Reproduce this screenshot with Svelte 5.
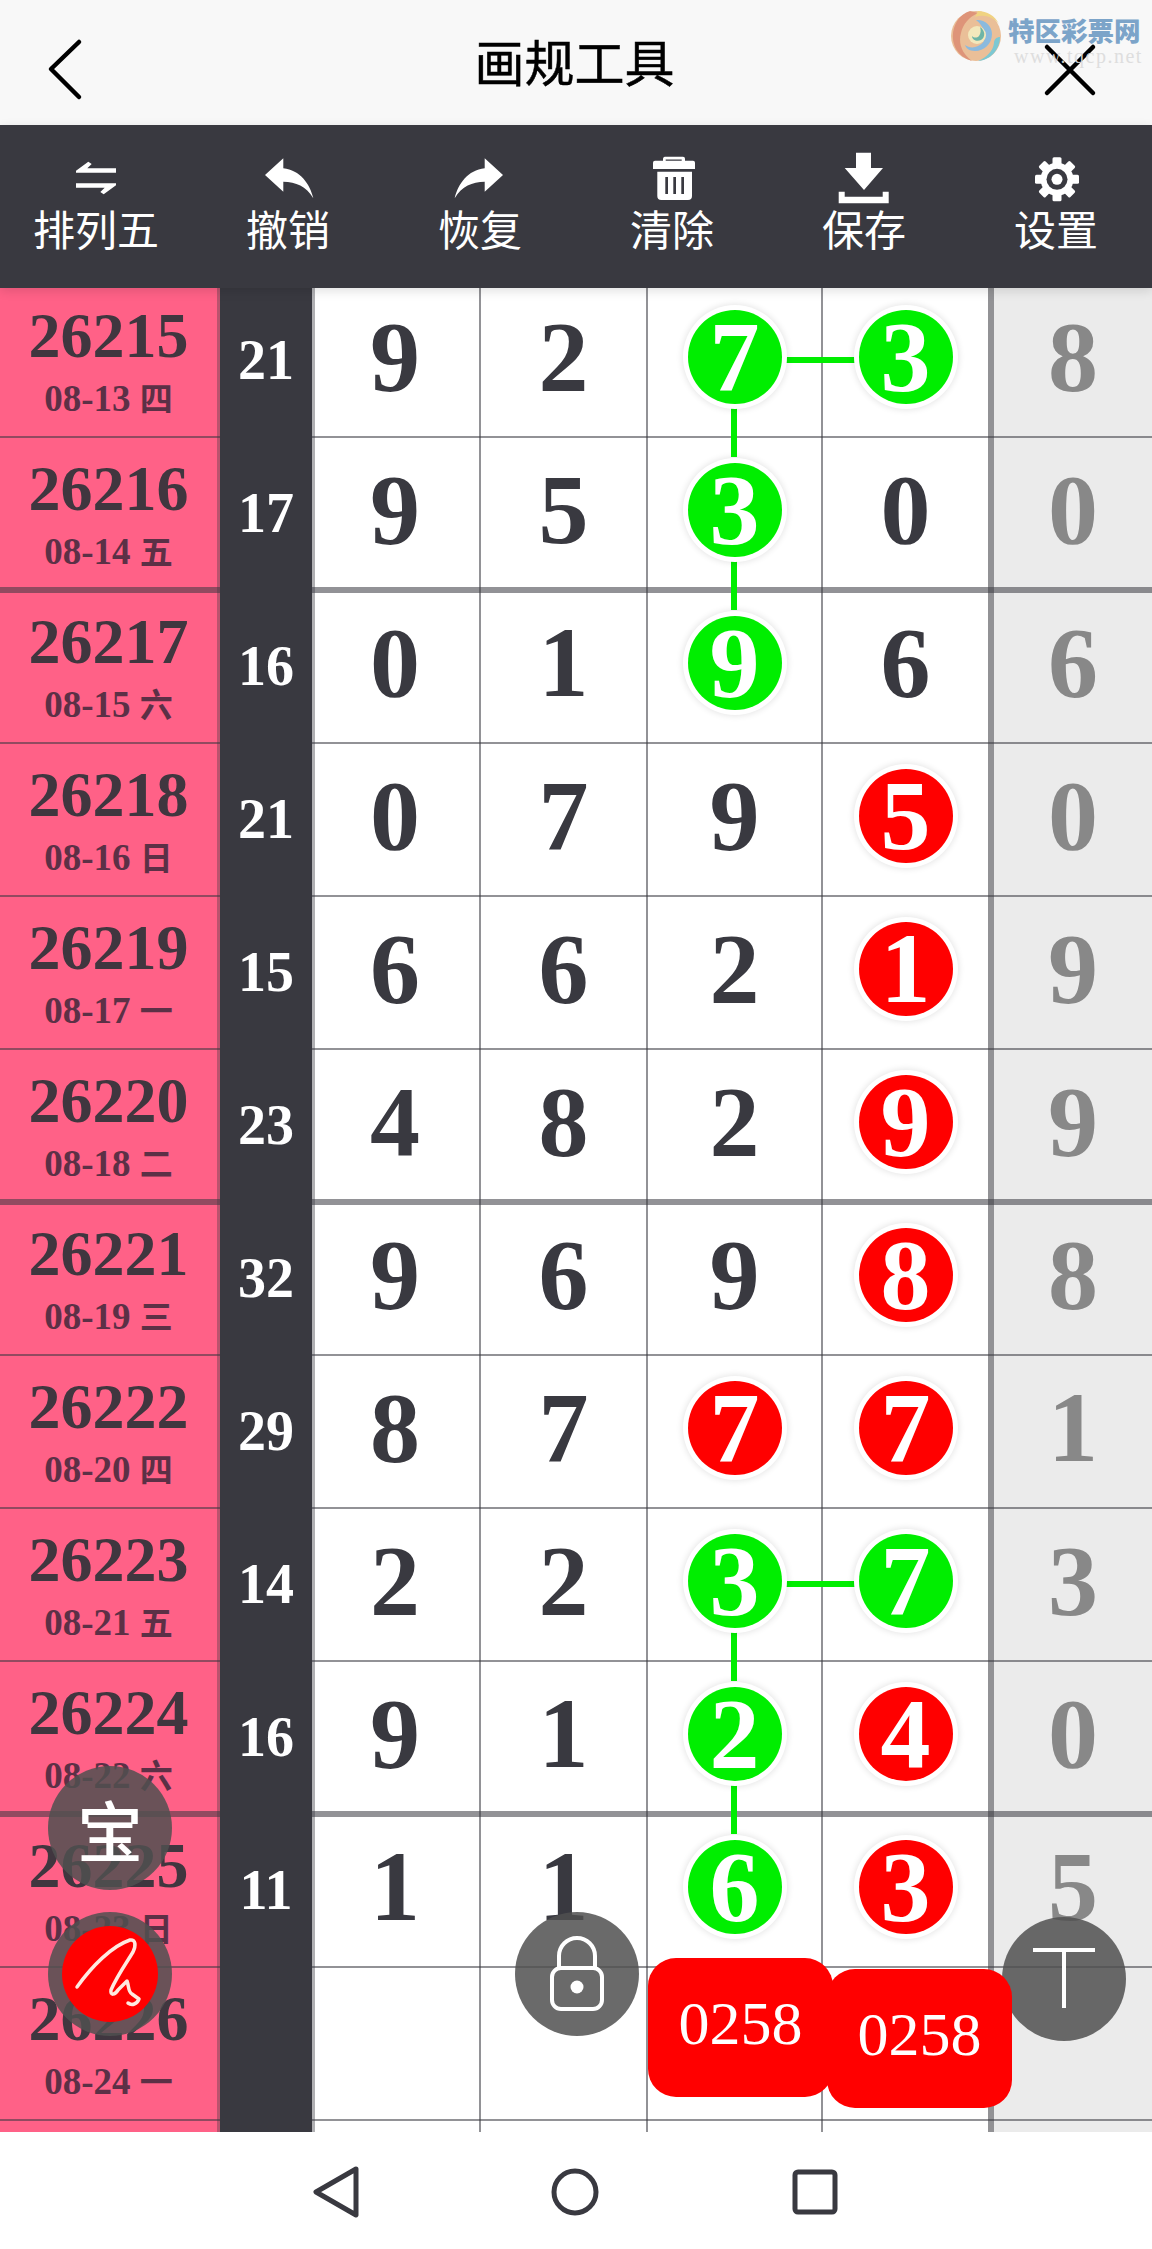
<script lang="ts">
  type Cell = number | null;
  interface Row {
    period: number;
    date: string;
    week: string;
    sum: number | null;
    nums: Cell[];
    /* index of the column -> ball colour */
    balls?: Record<number, 'g' | 'r'>;
    down?: boolean; // connector to the ball in the row below
    side?: boolean; // connector between the two balls of this row
  }

  const rows: Row[] = [
    { period: 26215, date: '08-13', week: '四', sum: 21, nums: [9, 2, 7, 3, 8], balls: { 2: 'g', 3: 'g' }, down: true, side: true },
    { period: 26216, date: '08-14', week: '五', sum: 17, nums: [9, 5, 3, 0, 0], balls: { 2: 'g' }, down: true },
    { period: 26217, date: '08-15', week: '六', sum: 16, nums: [0, 1, 9, 6, 6], balls: { 2: 'g' } },
    { period: 26218, date: '08-16', week: '日', sum: 21, nums: [0, 7, 9, 5, 0], balls: { 3: 'r' } },
    { period: 26219, date: '08-17', week: '一', sum: 15, nums: [6, 6, 2, 1, 9], balls: { 3: 'r' } },
    { period: 26220, date: '08-18', week: '二', sum: 23, nums: [4, 8, 2, 9, 9], balls: { 3: 'r' } },
    { period: 26221, date: '08-19', week: '三', sum: 32, nums: [9, 6, 9, 8, 8], balls: { 3: 'r' } },
    { period: 26222, date: '08-20', week: '四', sum: 29, nums: [8, 7, 7, 7, 1], balls: { 2: 'r', 3: 'r' } },
    { period: 26223, date: '08-21', week: '五', sum: 14, nums: [2, 2, 3, 7, 3], balls: { 2: 'g', 3: 'g' }, down: true, side: true },
    { period: 26224, date: '08-22', week: '六', sum: 16, nums: [9, 1, 2, 4, 0], balls: { 2: 'g', 3: 'r' }, down: true },
    { period: 26225, date: '08-23', week: '日', sum: 11, nums: [1, 1, 6, 3, 5], balls: { 2: 'g', 3: 'r' } },
    { period: 26226, date: '08-24', week: '一', sum: null, nums: [null, null, null, null, null] }
  ];

  const tools = ['排列五', '撤销', '恢复', '清除', '保存', '设置'];
  const teeth = [0, 45, 90, 135, 180, 225, 270, 315];
</script>

<div class="app">
  <header class="top">
    <svg class="back" viewBox="0 0 40 64" aria-hidden="true">
      <path d="M34 5 6 32l28 28" />
    </svg>
    <h1>画规工具</h1>
    <svg class="close" viewBox="0 0 56 56" aria-hidden="true">
      <path d="M5 5l46 46M51 5 5 51" />
    </svg>
  </header>

  <nav class="tools">
    {#each tools as label, i}
      <div class="tool">
        <svg viewBox="0 0 60 60" aria-hidden="true">
          {#if i === 0}
            <path d="M10 20.7 22.3 11.7l3.4 2.3-4.400 4.300H50v4.400H10zM50 35.300 37.700 44.300 34.300 42l4.400-4.300H10v-4.400h40z" />
          {:else if i === 1}
            <path d="M7 25 25.300 8.300v10C42 20 52 34 55.300 48.300 48 36 38 32 25.300 31.700v10z" />
          {:else if i === 2}
            <path transform="translate(60 0) scale(-1 1)" d="M7 25 25.300 8.300v10C42 20 52 34 55.300 48.300 48 36 38 32 25.300 31.700v10z" />
          {:else if i === 3}
            <path d="M22.700 6.700h18.300a2 2 0 0 1 2 2v2h8a2 2 0 0 1 2 2v6.300H11v-6.300a2 2 0 0 1 2-2h8v-2a2 2 0 0 1 1.700-2zM15.300 21.700H50V46a4 4 0 0 1-4 4H19.300a4 4 0 0 1-4-4z" />
            <path class="cut" d="M23.300 27h2.700v17h-2.700zM31.300 27H34v17h-2.700zM39.300 27H42v17h-2.700zM23.700 9.400h16v1.400h-16z" />
          {:else if i === 4}
            <path d="M22 2.700h15V18h12L30 40 10.700 18H22zM4.700 41.700h6v5h38v-5h6v11.600H4.700z" />
          {:else}
            <g transform="translate(31 29.300)">
              {#each teeth as t}
                <rect x="-4.500" y="-22" width="9" height="12" rx="1.500" transform="rotate({t})" />
              {/each}
              <circle r="16.500" />
              <circle class="cut" r="10.500" />
              <circle r="5.500" />
            </g>
          {/if}
        </svg>
        <span>{label}</span>
      </div>
    {/each}
  </nav>

  <main class="board">
    <div class="rows">
      {#each rows as row, i}
        <div class="row" class:thick={row.period % 4 === 0} style="z-index: {rows.length - i + 1}">
          <div class="period">
            <strong>{row.period}</strong>
            <span>{row.date} <em>{row.week}</em></span>
          </div>
          <div class="sum">{row.sum ?? ''}</div>
          {#each row.nums as n, c}
            {@const ball = row.balls?.[c]}
            <div class="num">
              {#if ball}
                <b class="ball {ball}">{n}</b>
              {:else}
                {n ?? ''}
              {/if}
            </div>
          {/each}
          {#if row.down}<i class="link down"></i>{/if}
          {#if row.side}<i class="link side"></i>{/if}
        </div>
      {/each}
      <div class="row">
        <div class="period"></div>
        <div class="sum"></div>
        {#each [0, 1, 2, 3, 4] as _}
          <div class="num"></div>
        {/each}
      </div>
    </div>
  </main>

  <footer class="softkeys">
    <svg viewBox="0 0 48 54" class="k-back" aria-hidden="true">
      <path d="M44 4 4 27l40 23z" />
    </svg>
    <svg viewBox="0 0 54 54" class="k-home" aria-hidden="true">
      <circle cx="27" cy="27" r="21" />
    </svg>
    <svg viewBox="0 0 54 54" class="k-recent" aria-hidden="true">
      <rect x="5" y="5" width="40" height="40" rx="3" />
    </svg>
  </footer>

  <!-- watermark stamped on the header -->
  <div class="mark" aria-hidden="true">
    <svg viewBox="0 0 52 54">
      <circle cx="26" cy="27" r="25" fill="#e9b98e" />
      <path d="M20 2C6 6-1 24 5 38c3 7 10 12 17 14C12 45 8 34 11 24 13 15 19 8 28 4z" fill="#dc8a6c" />
      <path d="M28 2c9 0 17 5 21 13-6-7-15-10-24-7z" fill="#f0cf75" />
      <path d="M50 28c0 12-9 23-22 24 9-4 15-10 16-18 0-4 3-6 6-6z" fill="#6fc3cf" />
      <path d="M26 11c8-1 16 5 16 14 0 10-8 17-17 17-6 0-9-3-10-6 4 3 9 3 13 1 5-2 8-7 7-12-1-6-5-11-9-14z" fill="#7fb4dc" />
      <circle cx="27" cy="26" r="9" fill="#f3e7b6" />
      <path d="M30 18c5 3 6 10 1 13-4 2-9 0-9-4 2 2 5 2 7 0 2-3 2-6 1-9z" fill="#5fae9e" />
    </svg>
    <div>
      <strong>特区彩票网</strong>
      <small>www.tqcp.net</small>
    </div>
  </div>

  <button class="fab bao">宝</button>
  <button class="fab pen" aria-label="画笔">
    <span>
      <svg viewBox="0 0 96 96" aria-hidden="true">
        <path d="M15 61C30 40 50 20 68 14c6-1 6 6 3 12-6 10-16 24-22 38-1 6 4 5 7 0l9-9c2 5 1 11 5 13l7 5c-2 5-7 7-11 4" />
      </svg>
    </span>
  </button>
  <button class="fab lock" aria-label="锁定">
    <svg viewBox="0 0 124 124" aria-hidden="true">
      <rect x="37" y="56" width="50" height="41" rx="9" />
      <path d="M44 56V44a18 18 0 0 1 36 0v12" />
      <circle class="dot" cx="62" cy="75" r="6.500" />
    </svg>
  </button>
  <button class="fab text" aria-label="文字">
    <svg viewBox="0 0 124 124" aria-hidden="true">
      <path d="M31 33h62M62 33v58" />
    </svg>
  </button>
  <div class="chip one">0258</div>
  <div class="chip two">0258</div>
</div>

<style>
  :global(body) {
    margin: 0;
    background: #fff;
  }

  .app {
    position: relative;
    width: 1152px;
    height: 2249px;
    overflow: hidden;
    display: flex;
    flex-direction: column;
    font-family: 'Liberation Serif', 'Noto Sans CJK SC', serif;
    color: #393940;
  }

  .top {
    flex: 0 0 125px;
    display: grid;
    grid-template-columns: 1fr auto 1fr;
    align-items: center;
    padding: 0 54px 0 45px;
    background: #f8f8f8;
    color: #000;
  }

  .top h1 {
    margin: 0 0 6px;
    padding-left: 6px;
    font: 400 50px/1 'Noto Sans CJK SC', sans-serif;
    -webkit-text-stroke: 0.5px #000;
  }

  .back {
    width: 40px;
    height: 64px;
    margin-top: 12px;
    fill: none;
    stroke: #000;
    stroke-width: 4.5;
    stroke-linecap: round;
    stroke-linejoin: round;
  }

  .close {
    justify-self: end;
    width: 56px;
    height: 56px;
    margin-top: 14px;
    fill: none;
    stroke: #000;
    stroke-width: 4.5;
    stroke-linecap: round;
  }

  .tools {
    position: relative;
    z-index: 50;
    flex: 0 0 163px;
    display: grid;
    grid-template-columns: repeat(6, 1fr);
    background: #393940;
    color: #fff;
    box-shadow: 0 3px 10px rgb(0 0 0 / 0.12);
  }

  .tool {
    display: flex;
    flex-direction: column;
    align-items: center;
    padding-top: 25px;
  }

  .tool svg {
    width: 60px;
    height: 60px;
    fill: #fff;
  }

  .tool svg .cut {
    fill: #393940;
  }

  .tool span {
    font: 400 42px/46px 'Noto Sans CJK SC', sans-serif;
    margin-top: -5px;
  }

  .board {
    flex: 0 0 1844px;
    overflow: hidden;
  }

  .rows {
    margin-top: -4px;
  }

  .row {
    position: relative;
    display: grid;
    grid-template-columns: 220px 92px 167px 167px 175px 167px 164px;
    height: 153px;
  }

  .row::after {
    content: '';
    position: absolute;
    left: 0;
    right: 0;
    bottom: -1px;
    height: 2px;
    background: rgb(57 57 64 / 0.55);
  }

  .row.thick::after {
    bottom: -3px;
    height: 6px;
  }

  .period {
    box-sizing: border-box;
    display: flex;
    flex-direction: column;
    align-items: center;
    justify-content: center;
    padding-top: 12px;
    background: #ff6187;
    border-right: 3px solid rgb(57 57 64 / 0.35);
  }

  .period strong {
    font-size: 64px;
    line-height: 62px;
    color: #40363f;
  }

  .period span {
    font-size: 37px;
    font-weight: 700;
    line-height: 60px;
    color: #5c3046;
  }

  .period em {
    font-style: normal;
    font-size: 33px;
    font-family: 'Noto Sans CJK SC', sans-serif;
  }

  .sum {
    position: relative;
    z-index: 2;
    display: flex;
    align-items: center;
    justify-content: center;
    padding-bottom: 4px;
    box-sizing: border-box;
    margin-bottom: -3px;
    background: #393940;
    color: #fff;
    font-size: 56px;
    font-weight: 700;
  }

  .num {
    box-sizing: border-box;
    display: flex;
    align-items: center;
    justify-content: center;
    padding-bottom: 8px;
    border-left: 2px solid rgb(57 57 64 / 0.55);
    background: #fff;
    font-size: 100px;
    font-weight: 700;
    line-height: 1;
  }

  .num:nth-child(3) {
    border-left: 3px solid rgb(57 57 64 / 0.4);
    padding-right: 4px;
  }

  .num:nth-child(7) {
    border-left: 6px solid rgb(57 57 64 / 0.5);
    background: #ebebeb;
    color: #888;
  }

  .ball {
    position: relative;
    z-index: 3;
    display: flex;
    align-items: center;
    justify-content: center;
    width: 94px;
    height: 94px;
    border-radius: 50%;
    color: #fff;
    box-shadow:
      0 0 0 5px #fff,
      0 0 6px 6px rgb(0 0 0 / 0.1);
  }

  .ball.g {
    background: #00ee00;
  }

  .ball.r {
    background: #f00;
  }

  .link {
    position: absolute;
    z-index: 1;
    background: #00ee00;
  }

  .link.down {
    left: 731px;
    top: 72px;
    width: 6px;
    height: 101px;
  }

  .link.side {
    left: 735px;
    top: 73px;
    width: 172px;
    height: 6px;
  }

  .softkeys {
    flex: 1;
    position: relative;
    display: flex;
    align-items: flex-start;
    background: #fff;
    padding-top: 33px;
    box-sizing: border-box;
  }

  .softkeys svg {
    fill: none;
    stroke: #393940;
    stroke-width: 5;
    stroke-linejoin: round;
  }

  .k-back {
    width: 48px;
    height: 54px;
    margin-left: 312px;
  }

  .k-home {
    width: 54px;
    height: 54px;
    margin-left: 188px;
  }

  .k-recent {
    width: 54px;
    height: 54px;
    margin-left: 188px;
    margin-top: 2px;
  }

  .mark {
    position: absolute;
    left: 950px;
    top: 9px;
    display: flex;
    gap: 6px;
    opacity: 0.9;
  }

  .mark svg {
    width: 52px;
    height: 54px;
  }

  .mark div {
    display: flex;
    flex-direction: column;
    padding-top: 6px;
  }

  .mark strong {
    font: 900 26.500px/30px 'Noto Sans CJK SC', sans-serif;
    color: #6f9bc4;
  }

  .mark small {
    font: 400 20px/22px 'Liberation Serif', serif;
    letter-spacing: 1.500px;
    margin-left: 6px;
    color: #dcdcdc;
  }

  .fab {
    position: absolute;
    z-index: 60;
    width: 124px;
    height: 124px;
    padding: 0;
    border: 0;
    border-radius: 50%;
    background: rgb(80 80 80 / 0.85);
    color: #fff;
    display: flex;
    align-items: center;
    justify-content: center;
  }

  .fab svg {
    display: block;
    width: 100%;
    height: 100%;
  }

  .bao {
    left: 48px;
    top: 1766px;
    font: 500 66px/1 'Noto Sans CJK SC', sans-serif;
  }

  .pen {
    left: 48px;
    top: 1912px;
  }

  .pen span {
    width: 96px;
    height: 96px;
    border-radius: 50%;
    background: #f00;
  }

  .pen svg {
    fill: none;
    stroke: #ffe9e0;
    stroke-width: 3.500;
    stroke-linecap: round;
    stroke-linejoin: round;
  }

  .lock {
    left: 515px;
    top: 1912px;
  }

  .lock svg,
  .text svg {
    fill: none;
    stroke: #fff;
    stroke-width: 4;
  }

  .lock .dot {
    fill: #fff;
    stroke: none;
  }

  .text {
    left: 1002px;
    top: 1917px;
  }

  .chip {
    position: absolute;
    z-index: 70;
    box-sizing: border-box;
    width: 185px;
    height: 139px;
    padding-bottom: 10px;
    border-radius: 28px;
    background: #f00;
    color: #fff;
    font-size: 62px;
    line-height: 1;
    display: flex;
    align-items: center;
    justify-content: center;
  }

  .chip.one {
    left: 648px;
    top: 1958px;
  }

  .chip.two {
    left: 827px;
    top: 1969px;
  }
</style>
